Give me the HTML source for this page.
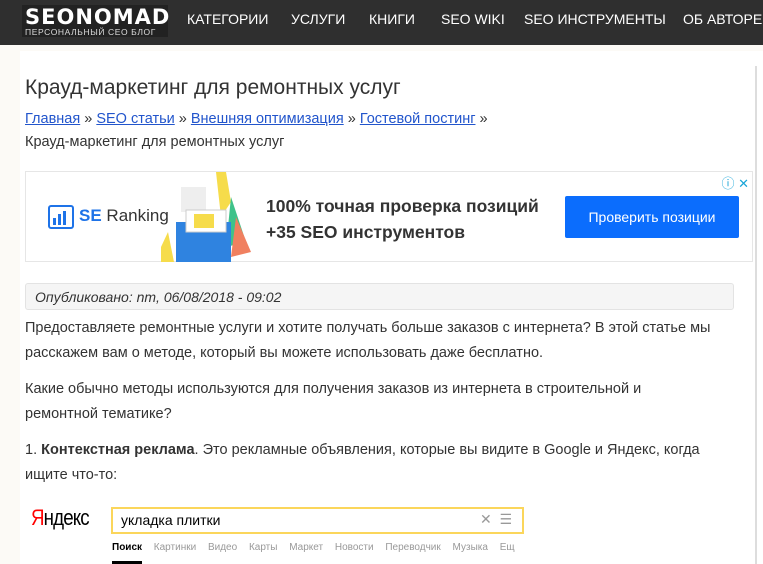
<!DOCTYPE html>
<html><head><meta charset="utf-8"><style>
*{margin:0;padding:0;box-sizing:border-box}
body{width:763px;height:564px;overflow:hidden;background:#fcfaf6;font-family:"Liberation Sans","DejaVu Sans",sans-serif;color:#333;position:relative}
.hdr{position:absolute;left:0;top:0;width:763px;height:45px;background:#2f2f2f}
.logo{position:absolute;left:22px;top:5px;width:146px;height:32px;background:#222}
.logo .b{position:absolute;left:3px;top:1px;color:#fff;font-weight:bold;font-size:21px;letter-spacing:1px;font-family:"DejaVu Sans",sans-serif;line-height:22px}
.logo .s{position:absolute;left:3px;top:23px;color:#ddd;font-size:8.5px;letter-spacing:.6px;line-height:9px}
.nav{position:absolute;top:10px;color:#fff;font-size:14px;line-height:18px;white-space:nowrap}
.card{position:absolute;left:20px;top:51px;width:743px;height:513px;background:#fff}
.vl{position:absolute;left:755px;top:66px;width:2px;height:498px;background:#ddd}
h1{position:absolute;left:25px;top:76px;font-weight:normal;font-size:21px;color:#333;white-space:nowrap}
.bc{position:absolute;left:25px;top:111px;font-size:14.5px;color:#333;white-space:nowrap}
.bc a{color:#2255cc;text-decoration:underline}
.bc2{position:absolute;left:25px;top:134px;font-size:14.5px;color:#333}
.ad{position:absolute;left:25px;top:171px;width:728px;height:91px;border:1px solid #e6e6e6;background:#fff}
.p{position:absolute;left:25px;font-size:14.5px;line-height:25px;color:#333;width:720px}
.pub{position:absolute;left:25px;top:283px;width:709px;height:27px;background:#f5f5f5;border:1px solid #e3e3e3;border-radius:3px;font-style:italic;font-size:14px;padding:5px 9px;color:#333}
</style></head><body>
<div class="hdr">
<div class="logo"><div class="b">SEONOMAD</div><div class="s">ПЕРСОНАЛЬНЫЙ СЕО БЛОГ</div></div>
<div class="nav" style="left:187px">КАТЕГОРИИ</div>
<div class="nav" style="left:291px">УСЛУГИ</div>
<div class="nav" style="left:369px">КНИГИ</div>
<div class="nav" style="left:441px">SEO WIKI</div>
<div class="nav" style="left:524px">SEO ИНСТРУМЕНТЫ</div>
<div class="nav" style="left:683px">ОБ АВТОРЕ</div>
</div>
<div class="card"></div>
<div class="vl"></div>
<h1>Крауд-маркетинг для ремонтных услуг</h1>
<div class="bc"><a>Главная</a> » <a>SEO статьи</a> » <a>Внешняя оптимизация</a> » <a>Гостевой постинг</a> »</div>
<div class="bc2">Крауд-маркетинг для ремонтных услуг</div>
<div class="ad">
<svg style="position:absolute;left:22px;top:33px" width="26" height="24"><rect x="1" y="1" width="24" height="22" rx="2" fill="none" stroke="#1e73e8" stroke-width="2"/><rect x="5" y="13" width="3" height="7" fill="#1e73e8"/><rect x="10" y="9" width="3" height="11" fill="#1e73e8"/><rect x="15" y="6" width="3" height="14" fill="#1e73e8"/></svg>
<div style="position:absolute;left:53px;top:34px;font-size:17px;color:#333"><b style="color:#1e73e8">SE</b> Ranking</div>
<svg style="position:absolute;left:130px;top:0" width="110" height="90"><path d="M60 0 L70 0 L75 30 L65 45Z" fill="#f6dc4b"/><path d="M75 25 L90 70 L70 75 Z" fill="#3fc28a"/><path d="M80 45 L95 80 L75 85Z" fill="#f08060"/><rect x="20" y="50" width="55" height="40" fill="#2f83e0"/><rect x="25" y="15" width="25" height="25" fill="#eee"/><rect x="30" y="38" width="40" height="22" fill="#fff" stroke="#ccc"/><rect x="38" y="42" width="20" height="14" fill="#f6dc4b"/><path d="M5 75 L12 60 L18 90 L5 90Z" fill="#f6dc4b"/></svg>
<div style="position:absolute;left:240px;top:21px;font-size:17.5px;font-weight:bold;color:#333;line-height:26px;white-space:nowrap">100% точная проверка позиций<br>+35 SEO инструментов</div>
<div style="position:absolute;left:539px;top:24px;width:174px;height:42px;background:#0b6dfd;border-radius:2px;color:#fff;font-size:14px;text-align:center;line-height:42px">Проверить позиции</div>
<div style="position:absolute;right:3px;top:1px;color:#19a5d8;font-size:13px">ⓘ ✕</div>
</div>
<div class="pub">Опубликовано: nm, 06/08/2018 - 09:02</div>
<div class="p" style="top:316px">Предоставляете ремонтные услуги и хотите получать больше заказов с интернета? В этой статье мы расскажем вам о методе, который вы можете использовать даже бесплатно.</div>
<div class="p" style="top:377px;width:670px">Какие обычно методы используются для получения заказов из интернета в строительной и ремонтной тематике?</div>
<div class="p" style="top:438px">1. <b>Контекстная реклама</b>. Это рекламные объявления, которые вы видите в Google и Яндекс, когда ищите что-то:</div>
<div style="position:absolute;left:31px;top:505px;font-size:22px;color:#000;letter-spacing:-1px;transform:scaleX(.85);transform-origin:left"><span style="color:#f00">Я</span>ндекс</div>
<div style="position:absolute;left:111px;top:507px;width:413px;height:27px;border:2px solid #fbd65b;background:#fff;font-size:14px;padding:3px 8px;color:#000">укладка плитки<span style="position:absolute;right:10px;top:2px;color:#999">✕ &nbsp;☰</span></div>
<div style="position:absolute;left:112px;top:542px;font-size:10px;color:#999;word-spacing:9px;white-space:nowrap"><b style="color:#000">Поиск</b> Картинки Видео Карты Маркет Новости Переводчик Музыка Ещ</div>
<div style="position:absolute;left:112px;top:561px;width:30px;height:3px;background:#000"></div>
</body></html>
